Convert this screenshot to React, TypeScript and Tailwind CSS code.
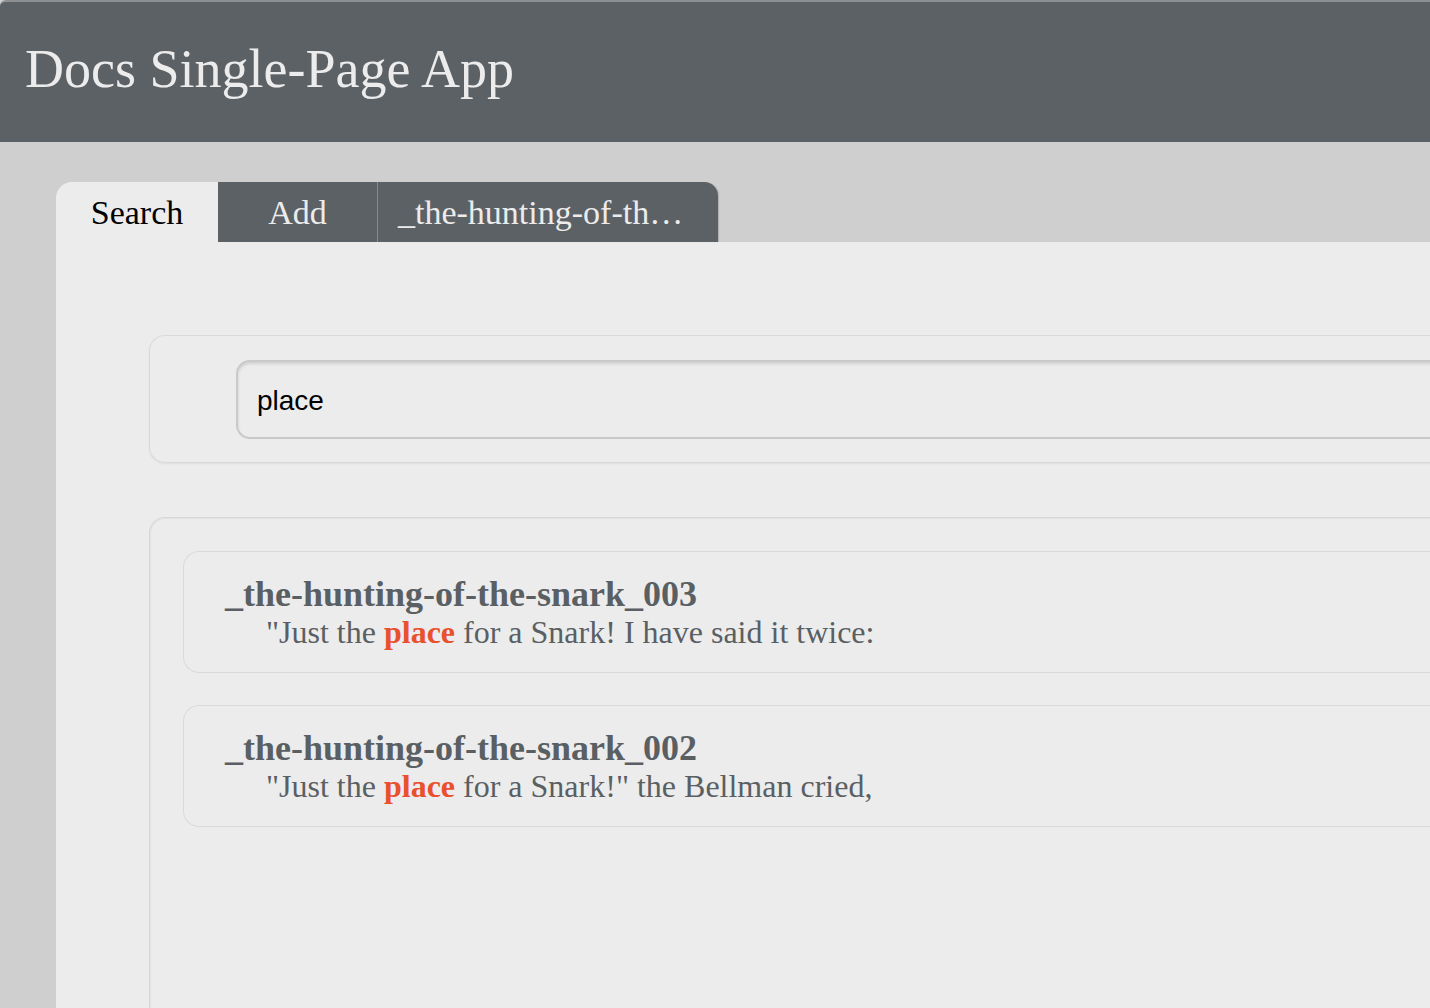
const results = [
  {
    id: '_the-hunting-of-the-snark_003',
    before: '"Just the ',
    match: 'place',
    after: ' for a Snark! I have said it twice:',
  },
  {
    id: '_the-hunting-of-the-snark_002',
    before: '"Just the ',
    match: 'place',
    after: ' for a Snark!" the Bellman cried,',
  },
];

export default function App() {
  return (
    <div className="w-[1430px] h-[1008px] overflow-hidden bg-[#cfcfcf] font-['Liberation_Serif',serif]">
      <header className="h-[142px] bg-[#5c6166] border-t-2 border-[#8d9093] rounded-tl-[6px] px-[25px] pt-[36px]">
        <h1 className="text-[54px] leading-[62px] text-[#ececec]">Docs Single-Page App</h1>
      </header>

      <main className="pl-[56px] pt-[40px] w-[1700px]">
        <nav className="flex h-[60px] text-[34px]">
          <button
            type="button"
            className="w-[162px] bg-[#ececec] rounded-tl-[16px] text-black"
          >
            Search
          </button>
          <button type="button" className="w-[159px] bg-[#5c6166] text-[#ececec]">
            Add
          </button>
          <button
            type="button"
            className="w-[341px] bg-[#5c6166] text-[#ececec] border-l border-[#878b8f] rounded-tr-[14px] shadow-[1px_0_1px_rgba(0,0,0,0.15)] px-[20px] truncate"
          >
            _the-hunting-of-the-snark_003
          </button>
        </nav>

        <section className="bg-[#ececec] h-[800px] pt-[93px] pl-[93px]">
          <div className="h-[128px] flex items-center rounded-l-[16px] border border-r-0 border-[#d9d9d9] shadow-[0_1px_2px_rgba(0,0,0,0.06)] pl-[86px]">
            <input
              readOnly
              value="place"
              className="w-full h-[79px] rounded-l-[14px] bg-[#ececec] border-2 border-r-0 border-[#c9c9c9] shadow-[inset_0_2px_3px_rgba(0,0,0,0.12)] pl-[19px] pt-[3px] text-[28px] text-black font-['Liberation_Sans',Arial,sans-serif] outline-none"
            />
          </div>

          <div className="mt-[54px] h-[600px] rounded-tl-[16px] border-l border-t border-[#d6d6d6] shadow-[inset_1px_1px_1px_rgba(0,0,0,0.04)] pl-[33px] pt-[33px] flex flex-col gap-[32px]">
            {results.map((r) => (
              <article
                key={r.id}
                className="h-[122px] rounded-l-[16px] border border-r-0 border-[#dadada] pl-[41px] pt-[24px] text-[#5a5f63]"
              >
                <h2 className="text-[36px] font-bold leading-[37px]">{r.id}</h2>
                <p className="text-[32px] leading-[38px] pl-[41px]">
                  {r.before}
                  <b className="text-[#e8502e]">{r.match}</b>
                  {r.after}
                </p>
              </article>
            ))}
          </div>
        </section>
      </main>
    </div>
  );
}
